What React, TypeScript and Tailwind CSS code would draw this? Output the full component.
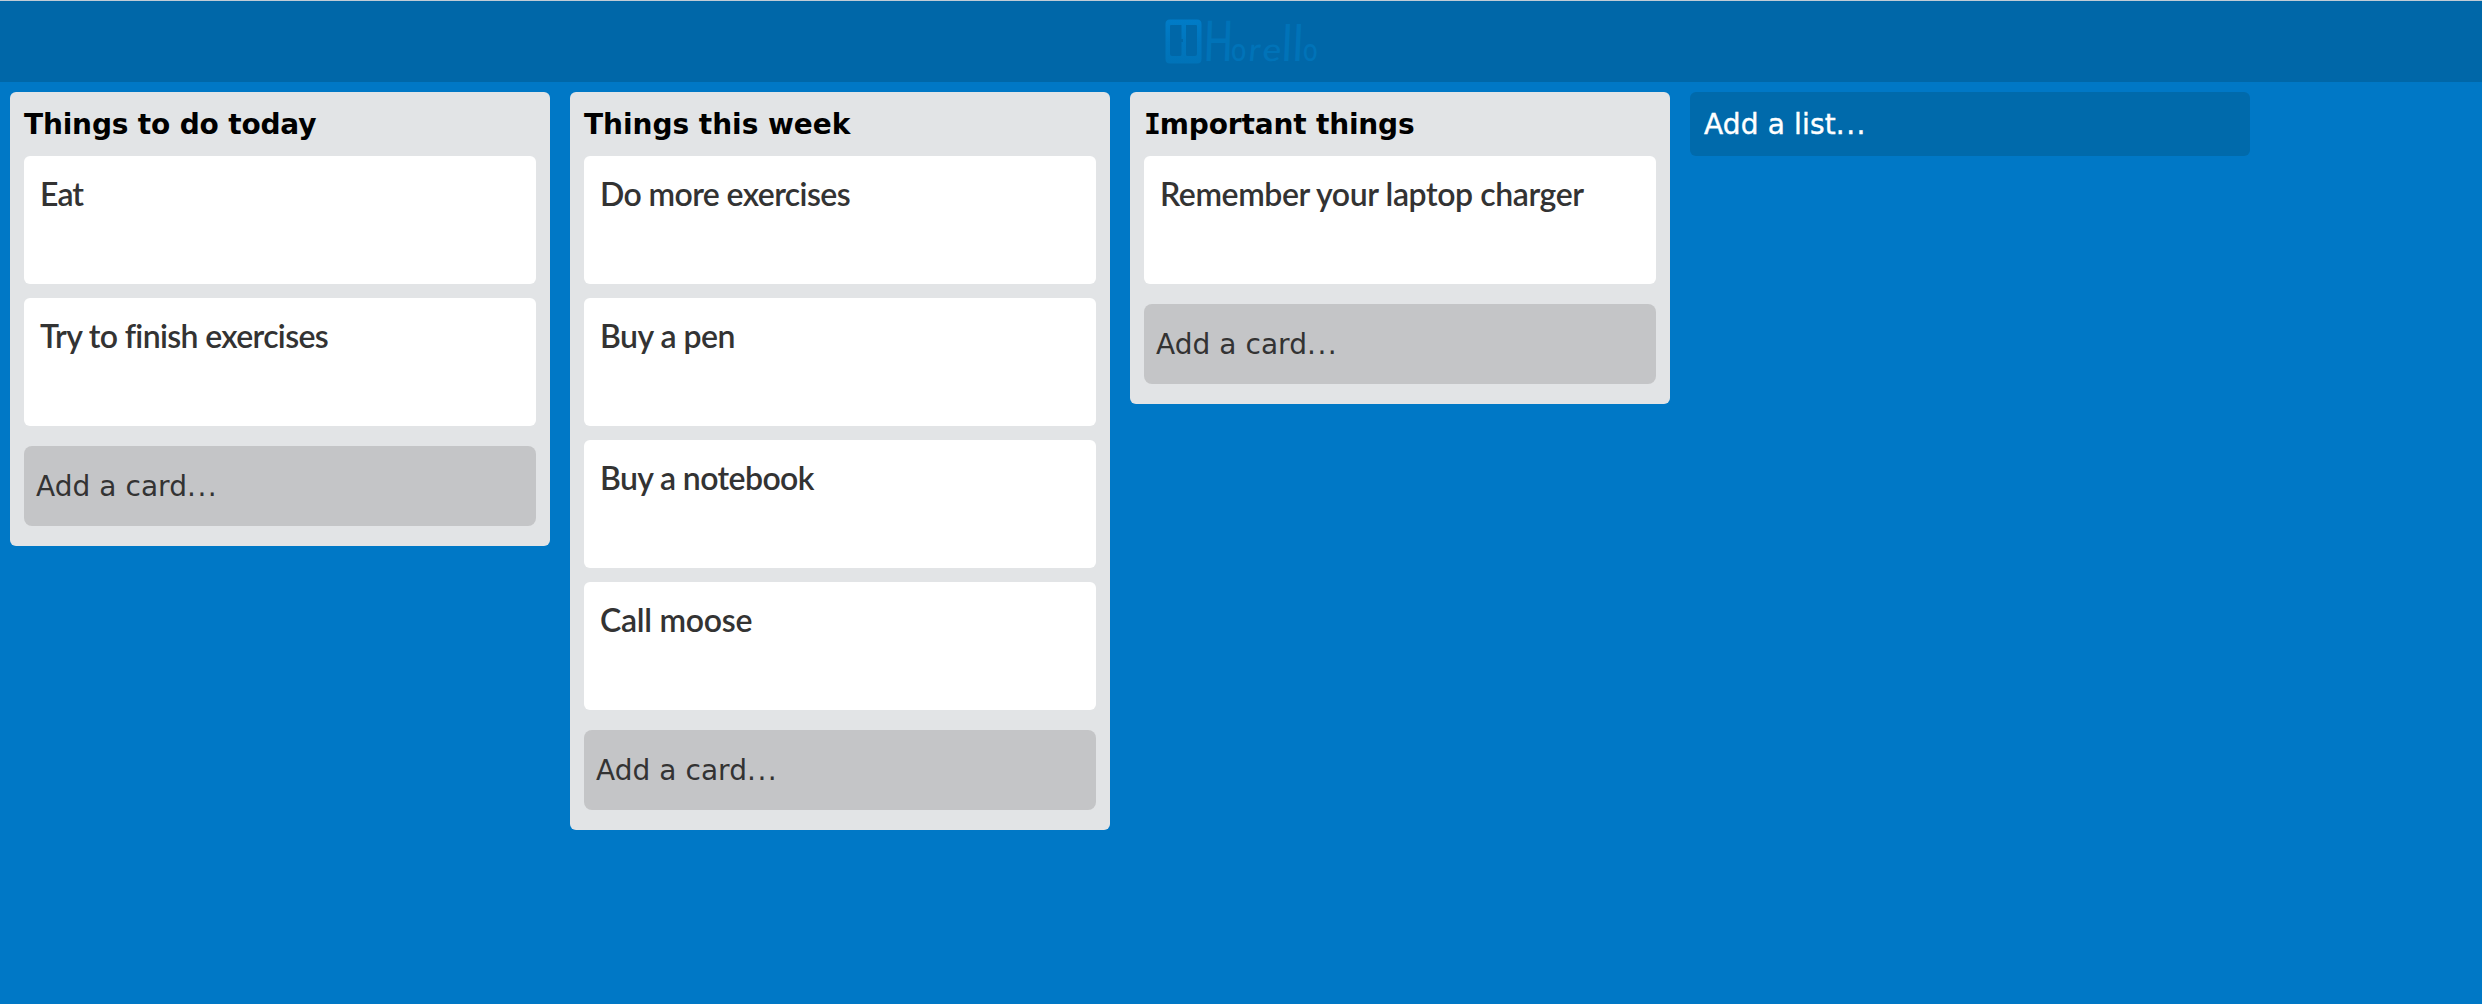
import React from "react";

type CardData = { text: string; tracking: string };
type ListData = { title: React.ReactNode; tracking: string; cards: CardData[] };

const lists: ListData[] = [
  {
    title: "Things to do today",
    tracking: "tracking-[-0.17px]",
    cards: [
      { text: "Eat", tracking: "tracking-[-0.9px]" },
      { text: "Try to finish exercises", tracking: "tracking-[-0.65px]" },
    ],
  },
  {
    title: "Things this week",
    tracking: "tracking-[-0.03px]",
    cards: [
      { text: "Do more exercises", tracking: "tracking-[-0.6px]" },
      { text: "Buy a pen", tracking: "tracking-[-0.5px]" },
      { text: "Buy a notebook", tracking: "tracking-[-0.6px]" },
      { text: "Call moose", tracking: "tracking-[-0.27px]" },
    ],
  },
  {
    title: (
      <>
        <span className="font-['DejaVu_Sans_Mono',monospace] tracking-[-1px]">I</span>mportant things
      </>
    ),
    tracking: "tracking-[-0.17px]",
    cards: [{ text: "Remember your laptop charger", tracking: "tracking-[-0.41px]" }],
  },
];

function Logo() {
  return (
    <div className="flex h-full w-[153px] items-start gap-[2px]">
      <svg className="mt-[18px] h-[45px] w-[37px] shrink-0" viewBox="0 0 37 45">
        <defs>
          <linearGradient id="board" x1="0" y1="0" x2="0" y2="1">
            <stop offset="0" stopColor="#007cc8" />
            <stop offset="0.5" stopColor="#0076be" />
            <stop offset="1" stopColor="#0073b8" />
          </linearGradient>
        </defs>
        <path
          fill="url(#board)"
          fillRule="evenodd"
          d="M5 0.5H32Q36.5 0.5 36.5 5V40Q36.5 44.5 32 44.5H5Q0.5 44.5 0.5 40V5Q0.5 0.5 5 0.5ZM6 6Q5 6 5 7V35Q5 37 7 37H15Q16.5 37 16.5 35.5V23H18V20H16.5V6ZM21 6V35.5Q21 37 22.5 37H30Q32 37 32 35V7Q32 6 31 6Z"
        />
      </svg>
      <div className="flex h-[60px] w-[113px] items-baseline whitespace-nowrap font-[Lato,sans-serif] font-medium leading-[78px] text-[#0073b8]">
        <span className="inline-block w-[27px] origin-left -skew-x-3 scale-x-[0.68] text-[56px]">H</span>
        <span className="inline-block w-[18px] origin-left scale-x-[0.84] text-[32px]">o</span>
        <span className="inline-block w-[14px] origin-left -skew-x-6 text-[32px]">r</span>
        <span className="inline-block w-[19px] origin-left -skew-x-6 scale-x-110 text-[32px]">e</span>
        <span className="inline-block w-[11px] origin-left -skew-x-3 scale-x-[0.85] text-[50px]">l</span>
        <span className="inline-block w-[10px] origin-left -skew-x-3 scale-x-[0.85] text-[50px]">l</span>
        <span className="inline-block w-[14px] origin-left scale-x-[0.8] text-[32px]">o</span>
      </div>
    </div>
  );
}

function Dots() {
  return <span className="tracking-[1.5px]">...</span>;
}

function List({ list }: { list: ListData }) {
  return (
    <section className="w-[540px] rounded-[6px] bg-[#e2e4e6] px-3.5 pb-5">
      <h2 className={`h-16 text-[28px] font-bold leading-[66px] text-black ${list.tracking}`}>{list.title}</h2>
      <div className="flex flex-col gap-3.5">
        {list.cards.map((card) => (
          <article
            key={card.text}
            className={`h-32 rounded-[6px] bg-white px-4 pt-[18px] font-[Lato,sans-serif] text-[32px] font-semibold leading-10 text-[#333] ${card.tracking}`}
          >
            {card.text}
          </article>
        ))}
      </div>
      <button className="mt-5 block h-20 w-full rounded-[8px] bg-[#c4c5c7] px-3 text-left text-[28px] leading-[82px] tracking-[0.05px] text-[#333]">
        Add a card
        <Dots />
      </button>
    </section>
  );
}

export default function App() {
  return (
    <div className="min-h-screen bg-[#0078c6] font-['DejaVu_Sans',sans-serif]">
      <header className="flex h-[82px] justify-center border-t border-[#c0ccd6] bg-[#0067a8]">
        <Logo />
      </header>
      <main className="flex items-start gap-5 px-2.5 pt-2.5">
        {lists.map((list, i) => (
          <List key={i} list={list} />
        ))}
        <button className="h-16 w-[560px] rounded-[6px] bg-[#006aab] px-3.5 text-left text-[28px] leading-[66px] tracking-[0.15px] text-white [-webkit-text-stroke:0.4px_white]">
          Add a list
          <Dots />
        </button>
      </main>
    </div>
  );
}
